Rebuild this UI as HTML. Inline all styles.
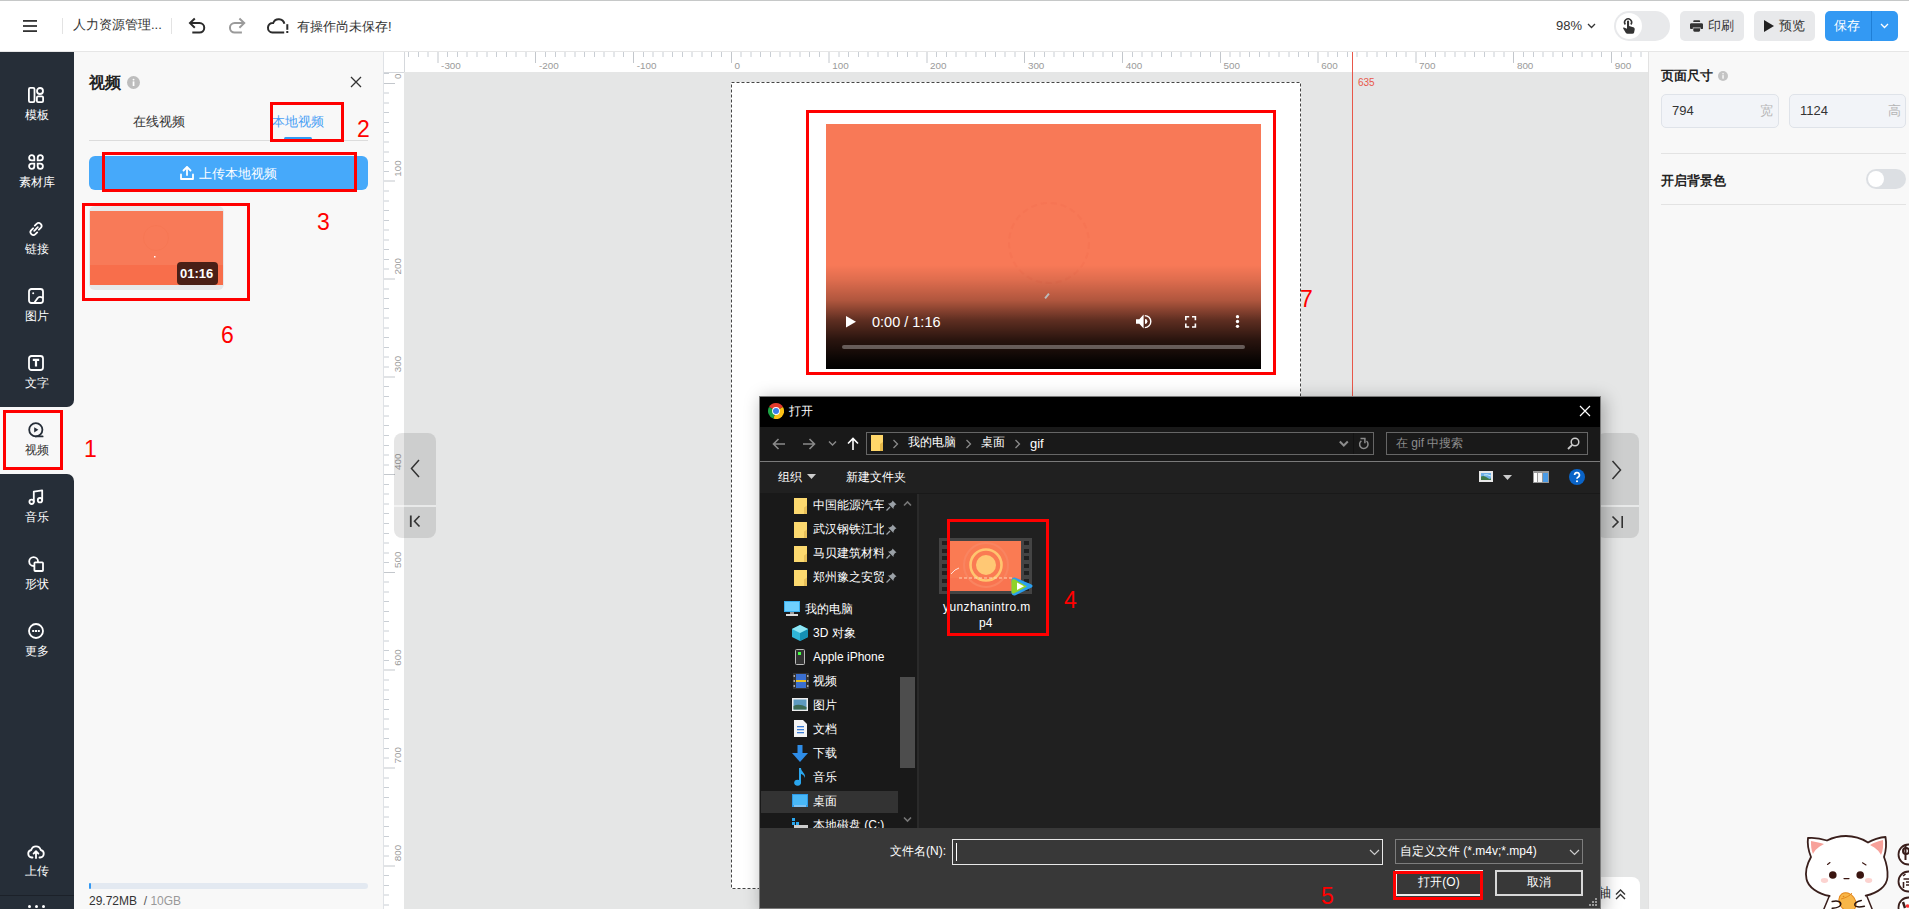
<!DOCTYPE html>
<html><head><meta charset="utf-8">
<style>
*{box-sizing:border-box;margin:0;padding:0}
html,body{width:1909px;height:909px;overflow:hidden;background:#fff;font-family:"Liberation Sans",sans-serif;color:#333}
.a{position:absolute}
.t{position:absolute;white-space:nowrap;line-height:1}
svg{display:block}
.rb{position:absolute;border:3px solid #ff0000}
.rn{position:absolute;color:#f00;font-size:23px;line-height:1;font-family:"Liberation Sans",sans-serif}
</style></head><body>

<!-- ============ TOP BAR ============ -->
<div class="a" style="left:0;top:0;width:1909px;height:52px;background:#fff;border-top:1px solid #c6c8c8;border-bottom:1px solid #e6e6e6"></div>
<svg class="a" style="left:23px;top:20px" width="14" height="12"><rect x="0" y="0" width="14" height="1.8" fill="#333"/><rect x="0" y="5.1" width="14" height="1.8" fill="#333"/><rect x="0" y="10.2" width="14" height="1.8" fill="#333"/></svg>
<div class="a" style="left:62px;top:18px;width:1px;height:16px;background:#e3e3e3"></div>
<div class="t" style="left:73px;top:18px;font-size:13px;color:#333">人力资源管理...</div>
<div class="a" style="left:171px;top:18px;width:1px;height:16px;background:#e3e3e3"></div>
<svg class="a" style="left:180px;top:10px" width="120" height="32" viewBox="180 10 120 32" fill="none" stroke-width="2" stroke-linecap="butt" stroke-linejoin="miter">
<path d="M194.8 18.5 L190 23.1 L194.8 27.7 M190.3 23.1 H199.5 A4.75 4.75 0 0 1 199.5 32.6 H192.3" stroke="#2b2b2b"/>
<path d="M239.4 18.5 L244.2 23.1 L239.4 27.7 M243.9 23.1 H234.7 A4.75 4.75 0 0 0 234.7 32.6 H241.9" stroke="#9a9a9a"/>
<path d="M284.4 23.8 A5.9 5.9 0 0 0 273.2 23 A4.8 4.8 0 0 0 272.4 32.6 H284.2" stroke="#2b2b2b"/>
<rect x="286.3" y="24.2" width="2" height="5.6" fill="#2b2b2b" stroke="none"/><rect x="286.3" y="31" width="2" height="2" fill="#2b2b2b" stroke="none"/>
</svg>
<div class="t" style="left:297px;top:20px;font-size:13px;color:#333">有操作尚未保存!</div>

<div class="t" style="left:1556px;top:19px;font-size:13px;color:#333">98%</div>
<svg class="a" style="left:1587px;top:23px" width="9" height="6"><path d="M1 1 L4.5 4.5 L8 1" fill="none" stroke="#333" stroke-width="1.3"/></svg>
<div class="a" style="left:1614px;top:11px;width:56px;height:30px;border-radius:15px;background:#e8e9eb"></div>
<div class="a" style="left:1616px;top:13px;width:26px;height:26px;border-radius:13px;background:#fff"></div>
<svg class="a" style="left:1610px;top:8px" width="40" height="36" viewBox="1610 8 40 36"><path d="M1625.3 24.5 A3.5 3.5 0 1 1 1630.9 24.5" stroke="#333" stroke-width="1.5" fill="none"/><path d="M1627 21.6 a1.05 1.05 0 0 1 2.1 0 V26 L1633.2 27.2 C1634.4 27.6 1634.9 28.4 1634.7 29.6 L1634.1 32.6 C1633.9 33.4 1633.3 33.8 1632.5 33.8 H1627.5 C1626.8 33.8 1626.3 33.5 1625.9 33 L1623.2 28.6 C1622.9 28 1623.4 27.4 1624 27.6 L1627 28.8 Z" fill="#333"/></svg>
<div class="a" style="left:1680px;top:11px;width:64px;height:30px;border-radius:5px;background:#e8e9eb"></div>
<svg class="a" style="left:1688px;top:18px" width="17" height="16" viewBox="1688 18 17 16"><path d="M1693.3 22 V21.3 C1693.3 20.7 1693.8 20.3 1694.4 20.3 H1699 C1699.6 20.3 1700.1 20.7 1700.1 21.3 V22 Z" fill="#333"/><path d="M1691.3 23.2 H1701.7 C1702.4 23.2 1703 23.8 1703 24.5 V28.2 C1703 28.7 1702.6 29.1 1702.1 29.1 H1700.6 V27.6 H1692.8 V29.1 H1691.2 C1690.6 29.1 1690 28.6 1690 28 V24.5 C1690 23.8 1690.6 23.2 1691.3 23.2 Z" fill="#333"/><path d="M1693.3 28.3 H1700.1 V30.6 C1700.1 31.3 1699.5 31.8 1698.9 31.8 H1694.5 C1693.8 31.8 1693.3 31.3 1693.3 30.6 Z" fill="#333"/></svg>
<div class="t" style="left:1708px;top:19px;font-size:13px;color:#333">印刷</div>
<div class="a" style="left:1754px;top:11px;width:61px;height:30px;border-radius:5px;background:#e8e9eb"></div>
<svg class="a" style="left:1764px;top:20px" width="10" height="12"><path d="M0 0 L10 6 L0 12 Z" fill="#222"/></svg>
<div class="t" style="left:1779px;top:19px;font-size:13px;color:#333">预览</div>
<div class="a" style="left:1825px;top:11px;width:73px;height:30px;border-radius:5px;background:#3399f3"></div>
<div class="a" style="left:1871px;top:11px;width:1px;height:30px;background:#1f7fd6"></div>
<div class="t" style="left:1834px;top:19px;font-size:13px;color:#fff">保存</div>
<svg class="a" style="left:1880px;top:23px" width="9" height="6"><path d="M1 1 L4.5 4.5 L8 1" fill="none" stroke="#fff" stroke-width="1.3"/></svg>

<!-- ============ SIDEBAR ============ -->
<div class="a" style="left:0;top:52px;width:80px;height:857px;background:#f8f8f8"></div>
<div class="a" style="left:0;top:52px;width:74px;height:355px;background:#262e38;border-bottom-right-radius:7px"></div>
<div class="a" style="left:0;top:407px;width:74px;height:67px;background:#f8f8f8"></div>
<div class="a" style="left:0;top:474px;width:74px;height:435px;background:#262e38;border-top-right-radius:7px"></div>
<div class="a" style="left:0;top:895px;width:74px;height:1px;background:#1c2129"></div>
<svg class="a" style="left:28px;top:87px" width="16" height="16" viewBox="0 0 16 16"><rect x="0.9" y="0.9" width="5.6" height="14.2" rx="1.3" fill="none" stroke="#fff" stroke-width="1.8" stroke-linecap="round" stroke-linejoin="round"/><circle cx="12" cy="4" r="3" fill="none" stroke="#fff" stroke-width="1.8" stroke-linecap="round" stroke-linejoin="round"/><rect x="8.9" y="9.4" width="6.2" height="5.7" rx="1.2" fill="none" stroke="#fff" stroke-width="1.8" stroke-linecap="round" stroke-linejoin="round"/></svg>
<div class="t" style="left:0;width:74px;text-align:center;top:109px;font-size:12px;color:#fff">模板</div>
<svg class="a" style="left:28px;top:154px" width="16" height="16" viewBox="0 0 16 16"><path d="M6.3 6.3 V3.7 A2.6 2.6 0 1 0 3.7 6.3 Z" fill="none" stroke="#fff" stroke-width="1.8" stroke-linejoin="miter"/><path d="M9.7 6.3 V3.7 A2.6 2.6 0 1 1 12.3 6.3 Z" fill="none" stroke="#fff" stroke-width="1.8" stroke-linejoin="miter"/><path d="M6.3 9.7 V12.3 A2.6 2.6 0 1 1 3.7 9.7 Z" fill="none" stroke="#fff" stroke-width="1.8" stroke-linejoin="miter"/><path d="M9.7 9.7 V12.3 A2.6 2.6 0 1 0 12.3 9.7 Z" fill="none" stroke="#fff" stroke-width="1.8" stroke-linejoin="miter"/></svg>
<div class="t" style="left:0;width:74px;text-align:center;top:176px;font-size:12px;color:#fff">素材库</div>
<svg class="a" style="left:28px;top:221px" width="16" height="16" viewBox="0 0 16 16"><path d="M6.8 4.6 L8.6 2.8 a2.9 2.9 0 0 1 4.1 4.1 L10.9 8.7" fill="none" stroke="#fff" stroke-width="1.8" stroke-linecap="round" stroke-linejoin="round"/><path d="M9.2 11.4 L7.4 13.2 a2.9 2.9 0 0 1 -4.1 -4.1 L5.1 7.3" fill="none" stroke="#fff" stroke-width="1.8" stroke-linecap="round" stroke-linejoin="round"/><path d="M6.2 9.8 L9.8 6.2" fill="none" stroke="#fff" stroke-width="1.8" stroke-linecap="round" stroke-linejoin="round"/></svg>
<div class="t" style="left:0;width:74px;text-align:center;top:243px;font-size:12px;color:#fff">链接</div>
<svg class="a" style="left:28px;top:288px" width="16" height="16" viewBox="0 0 16 16"><rect x="1" y="1" width="14" height="14" rx="2.5" fill="none" stroke="#fff" stroke-width="1.8" stroke-linecap="round" stroke-linejoin="round"/><circle cx="5.2" cy="5.2" r="1" fill="#fff"/><path d="M6.5 14.5 L9.5 10.2 C10.5 8.8 12.5 8.6 14.5 9.6" fill="none" stroke="#fff" stroke-width="1.8" stroke-linecap="round" stroke-linejoin="round"/></svg>
<div class="t" style="left:0;width:74px;text-align:center;top:310px;font-size:12px;color:#fff">图片</div>
<svg class="a" style="left:28px;top:355px" width="16" height="16" viewBox="0 0 16 16"><rect x="1" y="1" width="14" height="14" rx="2.5" fill="none" stroke="#fff" stroke-width="1.8" stroke-linecap="round" stroke-linejoin="round"/><path d="M4.8 4.8 H11.2 M8 4.8 V11.6" fill="none" stroke="#fff" stroke-width="2.2" stroke-linecap="butt"/></svg>
<div class="t" style="left:0;width:74px;text-align:center;top:377px;font-size:12px;color:#fff">文字</div>
<svg class="a" style="left:28px;top:422px" width="16" height="16" viewBox="0 0 16 16"><circle cx="7.8" cy="7.8" r="6.6" fill="none" stroke="#262e38" stroke-width="1.8"/><path d="M7.8 14.4 H14.6" stroke="#262e38" stroke-width="1.8" stroke-linecap="round"/><path d="M6.2 5.2 L10.4 7.8 L6.2 10.4 Z" fill="#262e38"/></svg>
<div class="t" style="left:0;width:74px;text-align:center;top:444px;font-size:12px;color:#333">视频</div>
<svg class="a" style="left:28px;top:489px" width="16" height="16" viewBox="0 0 16 16"><path d="M5.8 12.8 V2.6 L14.2 1.4 V11.2" fill="none" stroke="#fff" stroke-width="1.8" stroke-linecap="round" stroke-linejoin="round"/><circle cx="3.6" cy="12.8" r="2.2" fill="none" stroke="#fff" stroke-width="1.8" stroke-linecap="round" stroke-linejoin="round"/><circle cx="12" cy="11.2" r="2.2" fill="none" stroke="#fff" stroke-width="1.8" stroke-linecap="round" stroke-linejoin="round"/></svg>
<div class="t" style="left:0;width:74px;text-align:center;top:511px;font-size:12px;color:#fff">音乐</div>
<svg class="a" style="left:28px;top:556px" width="16" height="16" viewBox="0 0 16 16"><circle cx="5.6" cy="5.6" r="4.4" fill="none" stroke="#fff" stroke-width="1.8" stroke-linecap="round" stroke-linejoin="round"/><rect x="6.4" y="6.4" width="8.6" height="8.6" rx="0.8" fill="#262e38" stroke="#fff" stroke-width="1.8"/></svg>
<div class="t" style="left:0;width:74px;text-align:center;top:578px;font-size:12px;color:#fff">形状</div>
<svg class="a" style="left:28px;top:623px" width="16" height="16" viewBox="0 0 16 16"><circle cx="8" cy="8" r="7" fill="none" stroke="#fff" stroke-width="1.8" stroke-linecap="round" stroke-linejoin="round"/><rect x="4.2" y="7" width="2" height="2" fill="#fff"/><rect x="7" y="7" width="2" height="2" fill="#fff"/><rect x="9.8" y="7" width="2" height="2" fill="#fff"/></svg>
<div class="t" style="left:0;width:74px;text-align:center;top:645px;font-size:12px;color:#fff">更多</div>
<svg class="a" style="left:27px;top:843px" width="18" height="16" viewBox="0 0 18 16"><path d="M5.5 14.5 H4.8 A3.8 3.8 0 0 1 4.2 7 A5 5 0 0 1 13.8 7 A3.8 3.8 0 0 1 13.2 14.5 H12.5" fill="none" stroke="#fff" stroke-width="1.8" stroke-linecap="round" stroke-linejoin="round"/><path d="M9 15 V8.5 M6.6 10.6 L9 8.2 L11.4 10.6" fill="none" stroke="#fff" stroke-width="1.8" stroke-linecap="round" stroke-linejoin="round"/></svg>
<div class="t" style="left:0;width:74px;text-align:center;top:865px;font-size:12px;color:#fff">上传</div>
<div class="a" style="left:28px;top:905px;width:3px;height:3px;border-radius:2px;background:#fff"></div><div class="a" style="left:35px;top:905px;width:3px;height:3px;border-radius:2px;background:#fff"></div><div class="a" style="left:42px;top:905px;width:3px;height:3px;border-radius:2px;background:#fff"></div>

<!-- ============ PANEL ============ -->
<div class="a" style="left:74px;top:52px;width:310px;height:857px;background:#f8f8f8;border-right:1px solid #dfe2e6"></div>
<div class="t" style="left:89px;top:75px;font-size:16px;font-weight:bold;color:#222">视频</div>
<svg class="a" style="left:127px;top:76px" width="13" height="13" viewBox="0 0 13 13"><circle cx="6.5" cy="6.5" r="6.5" fill="#bdbdbd"/><rect x="5.7" y="5.4" width="1.7" height="4.6" fill="#fff"/><circle cx="6.55" cy="3.6" r="0.95" fill="#fff"/></svg>
<svg class="a" style="left:350px;top:76px" width="12" height="12"><path d="M1 1 L11 11 M11 1 L1 11" stroke="#333" stroke-width="1.3"/></svg>
<div class="t" style="left:133px;top:115px;font-size:13px;color:#333">在线视频</div>
<div class="t" style="left:272px;top:115px;font-size:13px;color:#4a9ff5">本地视频</div>
<div class="a" style="left:89px;top:140px;width:279px;height:1px;background:#dcdcdc"></div>
<div class="a" style="left:284px;top:137px;width:28px;height:3px;border-radius:2px;background:#3399f3"></div>
<div class="a" style="left:89px;top:156px;width:279px;height:34px;border-radius:6px;background:#46a9fa"></div>
<svg class="a" style="left:180px;top:166px" width="14" height="14" viewBox="0 0 14 14" fill="none" stroke="#fff" stroke-width="1.8" stroke-linecap="round" stroke-linejoin="round"><path d="M3.5 4.5 L7 1 L10.5 4.5"/><path d="M7 1.5 V9"/><path d="M1 8.5 V13 H13 V8.5"/></svg>
<div class="t" style="left:199px;top:167px;font-size:13px;color:#fff">上传本地视频</div>

<div class="a" style="left:89px;top:206px;width:135px;height:84px;border-radius:6px;background:#e7e8ea"></div>
<div class="a" style="left:90px;top:211px;width:133px;height:74px;background:#f87a58"></div>
<div class="a" style="left:90px;top:265px;width:133px;height:20px;background:#f86e4b"></div>
<svg class="a" style="left:90px;top:211px" width="133" height="74"><circle cx="66" cy="27" r="12.5" fill="none" stroke="#f57350" stroke-width="1" opacity=".45"/><rect x="64" y="45" width="1.5" height="1.5" fill="#fff"/></svg>
<div class="a" style="left:177px;top:262px;width:41px;height:23px;border-radius:4px;background:#4a1f16"></div>
<div class="t" style="left:180px;top:267px;font-size:13px;font-weight:bold;color:#fff">01:16</div>

<div class="a" style="left:89px;top:883px;width:279px;height:6px;border-radius:3px;background:#e3e9f1"></div>
<div class="a" style="left:89px;top:883px;width:2px;height:6px;border-radius:1px;background:#3399f3"></div>
<div class="t" style="left:89px;top:895px;font-size:12px;color:#333">29.72MB <span style="color:#555">&nbsp;/&nbsp;</span><span style="color:#999">10GB</span></div>

<!-- ============ CANVAS ============ -->
<div class="a" style="left:384px;top:52px;width:1264px;height:857px;background:#e5e6e6"></div>
<div class="a" style="left:384px;top:52px;width:1264px;height:20px;background:#fff"></div>
<div class="a" style="left:384px;top:52px;width:20px;height:857px;background:#fff"></div>
<div class="a" style="left:404px;top:52px;width:1px;height:20px;background:#d5d8dc"></div>
<div class="a" style="left:384px;top:72px;width:20px;height:1px;background:#d5d8dc"></div>
<svg width="1244" height="20" style="position:absolute;left:404px;top:52px" font-family="Liberation Sans, sans-serif"><line x1="4.5" y1="0" x2="4.5" y2="5" stroke="#c9ced4" stroke-width="1"/><line x1="14.5" y1="0" x2="14.5" y2="5" stroke="#c9ced4" stroke-width="1"/><line x1="24.0" y1="0" x2="24.0" y2="5" stroke="#c9ced4" stroke-width="1"/><line x1="34.0" y1="0" x2="34.0" y2="11" stroke="#c3c7cc" stroke-width="1"/><text x="37.1" y="17" font-size="9.9" fill="#9a9a9a">-300</text><line x1="43.5" y1="0" x2="43.5" y2="5" stroke="#c9ced4" stroke-width="1"/><line x1="53.5" y1="0" x2="53.5" y2="5" stroke="#c9ced4" stroke-width="1"/><line x1="63.0" y1="0" x2="63.0" y2="5" stroke="#c9ced4" stroke-width="1"/><line x1="73.0" y1="0" x2="73.0" y2="5" stroke="#c9ced4" stroke-width="1"/><line x1="83.0" y1="0" x2="83.0" y2="5" stroke="#c9ced4" stroke-width="1"/><line x1="92.5" y1="0" x2="92.5" y2="5" stroke="#c9ced4" stroke-width="1"/><line x1="102.5" y1="0" x2="102.5" y2="5" stroke="#c9ced4" stroke-width="1"/><line x1="112.0" y1="0" x2="112.0" y2="5" stroke="#c9ced4" stroke-width="1"/><line x1="122.0" y1="0" x2="122.0" y2="5" stroke="#c9ced4" stroke-width="1"/><line x1="131.5" y1="0" x2="131.5" y2="11" stroke="#c3c7cc" stroke-width="1"/><text x="134.9" y="17" font-size="9.9" fill="#9a9a9a">-200</text><line x1="141.5" y1="0" x2="141.5" y2="5" stroke="#c9ced4" stroke-width="1"/><line x1="151.5" y1="0" x2="151.5" y2="5" stroke="#c9ced4" stroke-width="1"/><line x1="161.0" y1="0" x2="161.0" y2="5" stroke="#c9ced4" stroke-width="1"/><line x1="171.0" y1="0" x2="171.0" y2="5" stroke="#c9ced4" stroke-width="1"/><line x1="180.5" y1="0" x2="180.5" y2="5" stroke="#c9ced4" stroke-width="1"/><line x1="190.5" y1="0" x2="190.5" y2="5" stroke="#c9ced4" stroke-width="1"/><line x1="200.0" y1="0" x2="200.0" y2="5" stroke="#c9ced4" stroke-width="1"/><line x1="210.0" y1="0" x2="210.0" y2="5" stroke="#c9ced4" stroke-width="1"/><line x1="219.5" y1="0" x2="219.5" y2="5" stroke="#c9ced4" stroke-width="1"/><line x1="229.5" y1="0" x2="229.5" y2="11" stroke="#c3c7cc" stroke-width="1"/><text x="232.7" y="17" font-size="9.9" fill="#9a9a9a">-100</text><line x1="239.5" y1="0" x2="239.5" y2="5" stroke="#c9ced4" stroke-width="1"/><line x1="249.0" y1="0" x2="249.0" y2="5" stroke="#c9ced4" stroke-width="1"/><line x1="259.0" y1="0" x2="259.0" y2="5" stroke="#c9ced4" stroke-width="1"/><line x1="268.5" y1="0" x2="268.5" y2="5" stroke="#c9ced4" stroke-width="1"/><line x1="278.5" y1="0" x2="278.5" y2="5" stroke="#c9ced4" stroke-width="1"/><line x1="288.0" y1="0" x2="288.0" y2="5" stroke="#c9ced4" stroke-width="1"/><line x1="298.0" y1="0" x2="298.0" y2="5" stroke="#c9ced4" stroke-width="1"/><line x1="307.5" y1="0" x2="307.5" y2="5" stroke="#c9ced4" stroke-width="1"/><line x1="317.5" y1="0" x2="317.5" y2="5" stroke="#c9ced4" stroke-width="1"/><line x1="327.5" y1="0" x2="327.5" y2="11" stroke="#c3c7cc" stroke-width="1"/><text x="330.5" y="17" font-size="9.9" fill="#9a9a9a">0</text><line x1="337.0" y1="0" x2="337.0" y2="5" stroke="#c9ced4" stroke-width="1"/><line x1="347.0" y1="0" x2="347.0" y2="5" stroke="#c9ced4" stroke-width="1"/><line x1="356.5" y1="0" x2="356.5" y2="5" stroke="#c9ced4" stroke-width="1"/><line x1="366.5" y1="0" x2="366.5" y2="5" stroke="#c9ced4" stroke-width="1"/><line x1="376.0" y1="0" x2="376.0" y2="5" stroke="#c9ced4" stroke-width="1"/><line x1="386.0" y1="0" x2="386.0" y2="5" stroke="#c9ced4" stroke-width="1"/><line x1="396.0" y1="0" x2="396.0" y2="5" stroke="#c9ced4" stroke-width="1"/><line x1="405.5" y1="0" x2="405.5" y2="5" stroke="#c9ced4" stroke-width="1"/><line x1="415.5" y1="0" x2="415.5" y2="5" stroke="#c9ced4" stroke-width="1"/><line x1="425.0" y1="0" x2="425.0" y2="11" stroke="#c3c7cc" stroke-width="1"/><text x="428.3" y="17" font-size="9.9" fill="#9a9a9a">100</text><line x1="435.0" y1="0" x2="435.0" y2="5" stroke="#c9ced4" stroke-width="1"/><line x1="444.5" y1="0" x2="444.5" y2="5" stroke="#c9ced4" stroke-width="1"/><line x1="454.5" y1="0" x2="454.5" y2="5" stroke="#c9ced4" stroke-width="1"/><line x1="464.0" y1="0" x2="464.0" y2="5" stroke="#c9ced4" stroke-width="1"/><line x1="474.0" y1="0" x2="474.0" y2="5" stroke="#c9ced4" stroke-width="1"/><line x1="484.0" y1="0" x2="484.0" y2="5" stroke="#c9ced4" stroke-width="1"/><line x1="493.5" y1="0" x2="493.5" y2="5" stroke="#c9ced4" stroke-width="1"/><line x1="503.5" y1="0" x2="503.5" y2="5" stroke="#c9ced4" stroke-width="1"/><line x1="513.0" y1="0" x2="513.0" y2="5" stroke="#c9ced4" stroke-width="1"/><line x1="523.0" y1="0" x2="523.0" y2="11" stroke="#c3c7cc" stroke-width="1"/><text x="526.1" y="17" font-size="9.9" fill="#9a9a9a">200</text><line x1="532.5" y1="0" x2="532.5" y2="5" stroke="#c9ced4" stroke-width="1"/><line x1="542.5" y1="0" x2="542.5" y2="5" stroke="#c9ced4" stroke-width="1"/><line x1="552.0" y1="0" x2="552.0" y2="5" stroke="#c9ced4" stroke-width="1"/><line x1="562.0" y1="0" x2="562.0" y2="5" stroke="#c9ced4" stroke-width="1"/><line x1="572.0" y1="0" x2="572.0" y2="5" stroke="#c9ced4" stroke-width="1"/><line x1="581.5" y1="0" x2="581.5" y2="5" stroke="#c9ced4" stroke-width="1"/><line x1="591.5" y1="0" x2="591.5" y2="5" stroke="#c9ced4" stroke-width="1"/><line x1="601.0" y1="0" x2="601.0" y2="5" stroke="#c9ced4" stroke-width="1"/><line x1="611.0" y1="0" x2="611.0" y2="5" stroke="#c9ced4" stroke-width="1"/><line x1="620.5" y1="0" x2="620.5" y2="11" stroke="#c3c7cc" stroke-width="1"/><text x="623.9" y="17" font-size="9.9" fill="#9a9a9a">300</text><line x1="630.5" y1="0" x2="630.5" y2="5" stroke="#c9ced4" stroke-width="1"/><line x1="640.5" y1="0" x2="640.5" y2="5" stroke="#c9ced4" stroke-width="1"/><line x1="650.0" y1="0" x2="650.0" y2="5" stroke="#c9ced4" stroke-width="1"/><line x1="660.0" y1="0" x2="660.0" y2="5" stroke="#c9ced4" stroke-width="1"/><line x1="669.5" y1="0" x2="669.5" y2="5" stroke="#c9ced4" stroke-width="1"/><line x1="679.5" y1="0" x2="679.5" y2="5" stroke="#c9ced4" stroke-width="1"/><line x1="689.0" y1="0" x2="689.0" y2="5" stroke="#c9ced4" stroke-width="1"/><line x1="699.0" y1="0" x2="699.0" y2="5" stroke="#c9ced4" stroke-width="1"/><line x1="708.5" y1="0" x2="708.5" y2="5" stroke="#c9ced4" stroke-width="1"/><line x1="718.5" y1="0" x2="718.5" y2="11" stroke="#c3c7cc" stroke-width="1"/><text x="721.7" y="17" font-size="9.9" fill="#9a9a9a">400</text><line x1="728.5" y1="0" x2="728.5" y2="5" stroke="#c9ced4" stroke-width="1"/><line x1="738.0" y1="0" x2="738.0" y2="5" stroke="#c9ced4" stroke-width="1"/><line x1="748.0" y1="0" x2="748.0" y2="5" stroke="#c9ced4" stroke-width="1"/><line x1="757.5" y1="0" x2="757.5" y2="5" stroke="#c9ced4" stroke-width="1"/><line x1="767.5" y1="0" x2="767.5" y2="5" stroke="#c9ced4" stroke-width="1"/><line x1="777.0" y1="0" x2="777.0" y2="5" stroke="#c9ced4" stroke-width="1"/><line x1="787.0" y1="0" x2="787.0" y2="5" stroke="#c9ced4" stroke-width="1"/><line x1="796.5" y1="0" x2="796.5" y2="5" stroke="#c9ced4" stroke-width="1"/><line x1="806.5" y1="0" x2="806.5" y2="5" stroke="#c9ced4" stroke-width="1"/><line x1="816.5" y1="0" x2="816.5" y2="11" stroke="#c3c7cc" stroke-width="1"/><text x="819.5" y="17" font-size="9.9" fill="#9a9a9a">500</text><line x1="826.0" y1="0" x2="826.0" y2="5" stroke="#c9ced4" stroke-width="1"/><line x1="836.0" y1="0" x2="836.0" y2="5" stroke="#c9ced4" stroke-width="1"/><line x1="845.5" y1="0" x2="845.5" y2="5" stroke="#c9ced4" stroke-width="1"/><line x1="855.5" y1="0" x2="855.5" y2="5" stroke="#c9ced4" stroke-width="1"/><line x1="865.0" y1="0" x2="865.0" y2="5" stroke="#c9ced4" stroke-width="1"/><line x1="875.0" y1="0" x2="875.0" y2="5" stroke="#c9ced4" stroke-width="1"/><line x1="885.0" y1="0" x2="885.0" y2="5" stroke="#c9ced4" stroke-width="1"/><line x1="894.5" y1="0" x2="894.5" y2="5" stroke="#c9ced4" stroke-width="1"/><line x1="904.5" y1="0" x2="904.5" y2="5" stroke="#c9ced4" stroke-width="1"/><line x1="914.0" y1="0" x2="914.0" y2="11" stroke="#c3c7cc" stroke-width="1"/><text x="917.3" y="17" font-size="9.9" fill="#9a9a9a">600</text><line x1="924.0" y1="0" x2="924.0" y2="5" stroke="#c9ced4" stroke-width="1"/><line x1="933.5" y1="0" x2="933.5" y2="5" stroke="#c9ced4" stroke-width="1"/><line x1="943.5" y1="0" x2="943.5" y2="5" stroke="#c9ced4" stroke-width="1"/><line x1="953.0" y1="0" x2="953.0" y2="5" stroke="#c9ced4" stroke-width="1"/><line x1="963.0" y1="0" x2="963.0" y2="5" stroke="#c9ced4" stroke-width="1"/><line x1="973.0" y1="0" x2="973.0" y2="5" stroke="#c9ced4" stroke-width="1"/><line x1="982.5" y1="0" x2="982.5" y2="5" stroke="#c9ced4" stroke-width="1"/><line x1="992.5" y1="0" x2="992.5" y2="5" stroke="#c9ced4" stroke-width="1"/><line x1="1002.0" y1="0" x2="1002.0" y2="5" stroke="#c9ced4" stroke-width="1"/><line x1="1012.0" y1="0" x2="1012.0" y2="11" stroke="#c3c7cc" stroke-width="1"/><text x="1015.1" y="17" font-size="9.9" fill="#9a9a9a">700</text><line x1="1021.5" y1="0" x2="1021.5" y2="5" stroke="#c9ced4" stroke-width="1"/><line x1="1031.5" y1="0" x2="1031.5" y2="5" stroke="#c9ced4" stroke-width="1"/><line x1="1041.0" y1="0" x2="1041.0" y2="5" stroke="#c9ced4" stroke-width="1"/><line x1="1051.0" y1="0" x2="1051.0" y2="5" stroke="#c9ced4" stroke-width="1"/><line x1="1061.0" y1="0" x2="1061.0" y2="5" stroke="#c9ced4" stroke-width="1"/><line x1="1070.5" y1="0" x2="1070.5" y2="5" stroke="#c9ced4" stroke-width="1"/><line x1="1080.5" y1="0" x2="1080.5" y2="5" stroke="#c9ced4" stroke-width="1"/><line x1="1090.0" y1="0" x2="1090.0" y2="5" stroke="#c9ced4" stroke-width="1"/><line x1="1100.0" y1="0" x2="1100.0" y2="5" stroke="#c9ced4" stroke-width="1"/><line x1="1109.5" y1="0" x2="1109.5" y2="11" stroke="#c3c7cc" stroke-width="1"/><text x="1112.9" y="17" font-size="9.9" fill="#9a9a9a">800</text><line x1="1119.5" y1="0" x2="1119.5" y2="5" stroke="#c9ced4" stroke-width="1"/><line x1="1129.5" y1="0" x2="1129.5" y2="5" stroke="#c9ced4" stroke-width="1"/><line x1="1139.0" y1="0" x2="1139.0" y2="5" stroke="#c9ced4" stroke-width="1"/><line x1="1149.0" y1="0" x2="1149.0" y2="5" stroke="#c9ced4" stroke-width="1"/><line x1="1158.5" y1="0" x2="1158.5" y2="5" stroke="#c9ced4" stroke-width="1"/><line x1="1168.5" y1="0" x2="1168.5" y2="5" stroke="#c9ced4" stroke-width="1"/><line x1="1178.0" y1="0" x2="1178.0" y2="5" stroke="#c9ced4" stroke-width="1"/><line x1="1188.0" y1="0" x2="1188.0" y2="5" stroke="#c9ced4" stroke-width="1"/><line x1="1197.5" y1="0" x2="1197.5" y2="5" stroke="#c9ced4" stroke-width="1"/><line x1="1207.5" y1="0" x2="1207.5" y2="11" stroke="#c3c7cc" stroke-width="1"/><text x="1210.7" y="17" font-size="9.9" fill="#9a9a9a">900</text><line x1="1217.5" y1="0" x2="1217.5" y2="5" stroke="#c9ced4" stroke-width="1"/><line x1="1227.0" y1="0" x2="1227.0" y2="5" stroke="#c9ced4" stroke-width="1"/><line x1="1237.0" y1="0" x2="1237.0" y2="5" stroke="#c9ced4" stroke-width="1"/></svg>
<svg width="20" height="837" style="position:absolute;left:384px;top:72px" font-family="Liberation Sans, sans-serif"><line x1="0" y1="1.5" x2="5" y2="1.5" stroke="#c9ced4" stroke-width="1"/><line x1="0" y1="11.5" x2="11" y2="11.5" stroke="#c3c7cc" stroke-width="1"/><text transform="translate(17,6.9) rotate(-90)" font-size="9.9" fill="#9a9a9a">0</text><line x1="0" y1="21.0" x2="5" y2="21.0" stroke="#c9ced4" stroke-width="1"/><line x1="0" y1="31.0" x2="5" y2="31.0" stroke="#c9ced4" stroke-width="1"/><line x1="0" y1="40.5" x2="5" y2="40.5" stroke="#c9ced4" stroke-width="1"/><line x1="0" y1="50.5" x2="5" y2="50.5" stroke="#c9ced4" stroke-width="1"/><line x1="0" y1="60.5" x2="5" y2="60.5" stroke="#c9ced4" stroke-width="1"/><line x1="0" y1="70.0" x2="5" y2="70.0" stroke="#c9ced4" stroke-width="1"/><line x1="0" y1="80.0" x2="5" y2="80.0" stroke="#c9ced4" stroke-width="1"/><line x1="0" y1="89.5" x2="5" y2="89.5" stroke="#c9ced4" stroke-width="1"/><line x1="0" y1="99.5" x2="5" y2="99.5" stroke="#c9ced4" stroke-width="1"/><line x1="0" y1="109.0" x2="11" y2="109.0" stroke="#c3c7cc" stroke-width="1"/><text transform="translate(17,104.7) rotate(-90)" font-size="9.9" fill="#9a9a9a">100</text><line x1="0" y1="119.0" x2="5" y2="119.0" stroke="#c9ced4" stroke-width="1"/><line x1="0" y1="129.0" x2="5" y2="129.0" stroke="#c9ced4" stroke-width="1"/><line x1="0" y1="138.5" x2="5" y2="138.5" stroke="#c9ced4" stroke-width="1"/><line x1="0" y1="148.5" x2="5" y2="148.5" stroke="#c9ced4" stroke-width="1"/><line x1="0" y1="158.0" x2="5" y2="158.0" stroke="#c9ced4" stroke-width="1"/><line x1="0" y1="168.0" x2="5" y2="168.0" stroke="#c9ced4" stroke-width="1"/><line x1="0" y1="177.5" x2="5" y2="177.5" stroke="#c9ced4" stroke-width="1"/><line x1="0" y1="187.5" x2="5" y2="187.5" stroke="#c9ced4" stroke-width="1"/><line x1="0" y1="197.0" x2="5" y2="197.0" stroke="#c9ced4" stroke-width="1"/><line x1="0" y1="207.0" x2="11" y2="207.0" stroke="#c3c7cc" stroke-width="1"/><text transform="translate(17,202.5) rotate(-90)" font-size="9.9" fill="#9a9a9a">200</text><line x1="0" y1="217.0" x2="5" y2="217.0" stroke="#c9ced4" stroke-width="1"/><line x1="0" y1="226.5" x2="5" y2="226.5" stroke="#c9ced4" stroke-width="1"/><line x1="0" y1="236.5" x2="5" y2="236.5" stroke="#c9ced4" stroke-width="1"/><line x1="0" y1="246.0" x2="5" y2="246.0" stroke="#c9ced4" stroke-width="1"/><line x1="0" y1="256.0" x2="5" y2="256.0" stroke="#c9ced4" stroke-width="1"/><line x1="0" y1="265.5" x2="5" y2="265.5" stroke="#c9ced4" stroke-width="1"/><line x1="0" y1="275.5" x2="5" y2="275.5" stroke="#c9ced4" stroke-width="1"/><line x1="0" y1="285.0" x2="5" y2="285.0" stroke="#c9ced4" stroke-width="1"/><line x1="0" y1="295.0" x2="5" y2="295.0" stroke="#c9ced4" stroke-width="1"/><line x1="0" y1="305.0" x2="11" y2="305.0" stroke="#c3c7cc" stroke-width="1"/><text transform="translate(17,300.3) rotate(-90)" font-size="9.9" fill="#9a9a9a">300</text><line x1="0" y1="314.5" x2="5" y2="314.5" stroke="#c9ced4" stroke-width="1"/><line x1="0" y1="324.5" x2="5" y2="324.5" stroke="#c9ced4" stroke-width="1"/><line x1="0" y1="334.0" x2="5" y2="334.0" stroke="#c9ced4" stroke-width="1"/><line x1="0" y1="344.0" x2="5" y2="344.0" stroke="#c9ced4" stroke-width="1"/><line x1="0" y1="353.5" x2="5" y2="353.5" stroke="#c9ced4" stroke-width="1"/><line x1="0" y1="363.5" x2="5" y2="363.5" stroke="#c9ced4" stroke-width="1"/><line x1="0" y1="373.5" x2="5" y2="373.5" stroke="#c9ced4" stroke-width="1"/><line x1="0" y1="383.0" x2="5" y2="383.0" stroke="#c9ced4" stroke-width="1"/><line x1="0" y1="393.0" x2="5" y2="393.0" stroke="#c9ced4" stroke-width="1"/><line x1="0" y1="402.5" x2="11" y2="402.5" stroke="#c3c7cc" stroke-width="1"/><text transform="translate(17,398.1) rotate(-90)" font-size="9.9" fill="#9a9a9a">400</text><line x1="0" y1="412.5" x2="5" y2="412.5" stroke="#c9ced4" stroke-width="1"/><line x1="0" y1="422.0" x2="5" y2="422.0" stroke="#c9ced4" stroke-width="1"/><line x1="0" y1="432.0" x2="5" y2="432.0" stroke="#c9ced4" stroke-width="1"/><line x1="0" y1="441.5" x2="5" y2="441.5" stroke="#c9ced4" stroke-width="1"/><line x1="0" y1="451.5" x2="5" y2="451.5" stroke="#c9ced4" stroke-width="1"/><line x1="0" y1="461.5" x2="5" y2="461.5" stroke="#c9ced4" stroke-width="1"/><line x1="0" y1="471.0" x2="5" y2="471.0" stroke="#c9ced4" stroke-width="1"/><line x1="0" y1="481.0" x2="5" y2="481.0" stroke="#c9ced4" stroke-width="1"/><line x1="0" y1="490.5" x2="5" y2="490.5" stroke="#c9ced4" stroke-width="1"/><line x1="0" y1="500.5" x2="11" y2="500.5" stroke="#c3c7cc" stroke-width="1"/><text transform="translate(17,495.9) rotate(-90)" font-size="9.9" fill="#9a9a9a">500</text><line x1="0" y1="510.0" x2="5" y2="510.0" stroke="#c9ced4" stroke-width="1"/><line x1="0" y1="520.0" x2="5" y2="520.0" stroke="#c9ced4" stroke-width="1"/><line x1="0" y1="529.5" x2="5" y2="529.5" stroke="#c9ced4" stroke-width="1"/><line x1="0" y1="539.5" x2="5" y2="539.5" stroke="#c9ced4" stroke-width="1"/><line x1="0" y1="549.5" x2="5" y2="549.5" stroke="#c9ced4" stroke-width="1"/><line x1="0" y1="559.0" x2="5" y2="559.0" stroke="#c9ced4" stroke-width="1"/><line x1="0" y1="569.0" x2="5" y2="569.0" stroke="#c9ced4" stroke-width="1"/><line x1="0" y1="578.5" x2="5" y2="578.5" stroke="#c9ced4" stroke-width="1"/><line x1="0" y1="588.5" x2="5" y2="588.5" stroke="#c9ced4" stroke-width="1"/><line x1="0" y1="598.0" x2="11" y2="598.0" stroke="#c3c7cc" stroke-width="1"/><text transform="translate(17,593.7) rotate(-90)" font-size="9.9" fill="#9a9a9a">600</text><line x1="0" y1="608.0" x2="5" y2="608.0" stroke="#c9ced4" stroke-width="1"/><line x1="0" y1="618.0" x2="5" y2="618.0" stroke="#c9ced4" stroke-width="1"/><line x1="0" y1="627.5" x2="5" y2="627.5" stroke="#c9ced4" stroke-width="1"/><line x1="0" y1="637.5" x2="5" y2="637.5" stroke="#c9ced4" stroke-width="1"/><line x1="0" y1="647.0" x2="5" y2="647.0" stroke="#c9ced4" stroke-width="1"/><line x1="0" y1="657.0" x2="5" y2="657.0" stroke="#c9ced4" stroke-width="1"/><line x1="0" y1="666.5" x2="5" y2="666.5" stroke="#c9ced4" stroke-width="1"/><line x1="0" y1="676.5" x2="5" y2="676.5" stroke="#c9ced4" stroke-width="1"/><line x1="0" y1="686.0" x2="5" y2="686.0" stroke="#c9ced4" stroke-width="1"/><line x1="0" y1="696.0" x2="11" y2="696.0" stroke="#c3c7cc" stroke-width="1"/><text transform="translate(17,691.5) rotate(-90)" font-size="9.9" fill="#9a9a9a">700</text><line x1="0" y1="706.0" x2="5" y2="706.0" stroke="#c9ced4" stroke-width="1"/><line x1="0" y1="715.5" x2="5" y2="715.5" stroke="#c9ced4" stroke-width="1"/><line x1="0" y1="725.5" x2="5" y2="725.5" stroke="#c9ced4" stroke-width="1"/><line x1="0" y1="735.0" x2="5" y2="735.0" stroke="#c9ced4" stroke-width="1"/><line x1="0" y1="745.0" x2="5" y2="745.0" stroke="#c9ced4" stroke-width="1"/><line x1="0" y1="754.5" x2="5" y2="754.5" stroke="#c9ced4" stroke-width="1"/><line x1="0" y1="764.5" x2="5" y2="764.5" stroke="#c9ced4" stroke-width="1"/><line x1="0" y1="774.0" x2="5" y2="774.0" stroke="#c9ced4" stroke-width="1"/><line x1="0" y1="784.0" x2="5" y2="784.0" stroke="#c9ced4" stroke-width="1"/><line x1="0" y1="794.0" x2="11" y2="794.0" stroke="#c3c7cc" stroke-width="1"/><text transform="translate(17,789.3) rotate(-90)" font-size="9.9" fill="#9a9a9a">800</text><line x1="0" y1="803.5" x2="5" y2="803.5" stroke="#c9ced4" stroke-width="1"/><line x1="0" y1="813.5" x2="5" y2="813.5" stroke="#c9ced4" stroke-width="1"/><line x1="0" y1="823.0" x2="5" y2="823.0" stroke="#c9ced4" stroke-width="1"/><line x1="0" y1="833.0" x2="5" y2="833.0" stroke="#c9ced4" stroke-width="1"/></svg>

<!-- ============ PAGE ============ -->
<div class="a" style="left:731px;top:82px;width:570px;height:807px;background:#fff"></div>
<svg class="a" style="left:731px;top:82px" width="571" height="807"><rect x="0.5" y="0.5" width="569" height="806" fill="none" stroke="#444" stroke-width="1" stroke-dasharray="3 2"/></svg>
<div class="a" style="left:1352px;top:52px;width:1px;height:857px;background:#e8574a"></div>
<div class="t" style="left:1358px;top:77.5px;font-size:10px;color:#e8574a">635</div>

<div class="a" style="left:826px;top:124px;width:435px;height:245px;background:#f87957;overflow:hidden">
  <svg class="a" style="left:168px;top:74px" width="110" height="90" viewBox="0 0 110 90"><circle cx="55" cy="45" r="40" fill="none" stroke="#f57452" stroke-width="2" stroke-dasharray="6 4" opacity="0.7"/></svg>
  <div class="a" style="left:0;top:141px;width:435px;height:104px;background:linear-gradient(to bottom,rgba(0,0,0,0) 0%,rgba(0,0,0,.1) 14%,rgba(0,0,0,.29) 34%,rgba(0,0,0,.62) 53%,rgba(0,0,0,.83) 72%,rgba(0,0,0,.96) 91%,rgba(0,0,0,1) 100%)"></div>
  <div class="a" style="left:218px;top:171px;width:6px;height:2px;background:#bbb;transform:rotate(-50deg)"></div>
  <svg class="a" style="left:20px;top:192px" width="10" height="12"><path d="M0 0 L10 5.8 L0 11.6 Z" fill="#fff"/></svg>
  <div class="t" style="left:46px;top:191px;font-size:14.5px;color:#fff;letter-spacing:0px">0:00 / 1:16</div>
  <svg class="a" style="left:0;top:0" width="435" height="245" viewBox="826 124 435 245">
<path d="M1136 319.2 H1139.3 L1143.6 314.6 V328.4 L1139.3 323.8 H1136 Z" fill="#fff"/>
<path d="M1145 319.1 A2.45 2.45 0 0 1 1145 324 Z" fill="#fff"/>
<path d="M1144.8 315.6 A6 6 0 0 1 1144.8 327.6" fill="none" stroke="#fff" stroke-width="1.4"/>
<path d="M1185.8 320.2 V316.8 H1189.2 M1192 316.8 H1195.4 V320.2 M1195.4 323.6 V327 H1192 M1189.2 327 H1185.8 V323.6" fill="none" stroke="#fff" stroke-width="1.6"/>
<circle cx="1237.5" cy="316.7" r="1.65" fill="#fff"/><circle cx="1237.5" cy="321.5" r="1.65" fill="#fff"/><circle cx="1237.5" cy="326.3" r="1.65" fill="#fff"/>
</svg>
<div class="a" style="left:16px;top:221px;width:403px;height:4px;border-radius:2px;background:rgba(255,255,255,.32)"></div>
</div>

<!-- nav buttons -->
<div class="a" style="left:394px;top:433px;width:42px;height:105px;border-radius:8px;background:rgba(0,0,0,.1)"></div>
<div class="a" style="left:394px;top:505px;width:42px;height:2px;background:rgba(255,255,255,.55)"></div>
<svg class="a" style="left:410px;top:459px" width="11" height="20"><path d="M9 1 L1.5 9.5 L9 18" fill="none" stroke="#333" stroke-width="1.5"/></svg>
<svg class="a" style="left:409px;top:514px" width="14" height="14"><path d="M1.8 1.5 V13" stroke="#333" stroke-width="1.8"/><path d="M10.5 2 L5.5 7.2 L10.5 12.5" fill="none" stroke="#333" stroke-width="1.6"/></svg>
<div class="a" style="left:1597px;top:433px;width:42px;height:105px;border-radius:8px;background:rgba(0,0,0,.1)"></div>
<div class="a" style="left:1597px;top:505px;width:42px;height:2px;background:rgba(255,255,255,.55)"></div>
<svg class="a" style="left:1611px;top:460px" width="11" height="20"><path d="M1.5 1 L9.5 10 L1.5 19" fill="none" stroke="#333" stroke-width="1.5"/></svg>
<svg class="a" style="left:1610px;top:515px" width="14" height="14"><path d="M12.2 1 V13" stroke="#333" stroke-width="1.6"/><path d="M2.5 1.5 L8 7 L2.5 12.5" fill="none" stroke="#333" stroke-width="1.6"/></svg>
<!-- bottom axis button -->
<div class="a" style="left:1560px;top:877px;width:80px;height:40px;border-radius:8px;background:#fff"></div>
<div class="t" style="left:1598px;top:886px;font-size:13px;color:#333">轴</div>
<svg class="a" style="left:1615px;top:889px" width="11" height="11"><path d="M1 5.5 L5.5 1 L10 5.5 M1 10 L5.5 5.5 L10 10" fill="none" stroke="#333" stroke-width="1.4"/></svg>


<!-- ============ RIGHT PANEL ============ -->
<div class="a" style="left:1648px;top:52px;width:261px;height:857px;background:#f8f8f8;border-left:1px solid #e2e2e2"></div>
<div class="t" style="left:1661px;top:69px;font-size:13px;font-weight:bold;color:#222">页面尺寸</div>
<svg class="a" style="left:1718px;top:71px" width="10" height="10" viewBox="0 0 13 13"><circle cx="6.5" cy="6.5" r="6.5" fill="#c4c4c4"/><rect x="5.7" y="5.4" width="1.7" height="4.6" fill="#fff"/><circle cx="6.55" cy="3.6" r="0.95" fill="#fff"/></svg>
<div class="a" style="left:1661px;top:94px;width:118px;height:34px;border-radius:5px;background:#f2f4f8;border:1px solid #dfe3e9"></div>
<div class="t" style="left:1672px;top:104px;font-size:13px;color:#333">794</div>
<div class="t" style="left:1760px;top:104px;font-size:13px;color:#b5b5b5">宽</div>
<div class="a" style="left:1789px;top:94px;width:117px;height:34px;border-radius:5px;background:#f2f4f8;border:1px solid #dfe3e9"></div>
<div class="t" style="left:1800px;top:104px;font-size:13px;color:#333">1124</div>
<div class="t" style="left:1888px;top:104px;font-size:13px;color:#b5b5b5">高</div>
<div class="a" style="left:1661px;top:153px;width:245px;height:1px;background:#e3e3e3"></div>
<div class="t" style="left:1661px;top:174px;font-size:13px;font-weight:bold;color:#222">开启背景色</div>
<div class="a" style="left:1866px;top:169px;width:40px;height:20px;border-radius:10px;background:#dcdfe3"></div>
<div class="a" style="left:1868px;top:171px;width:16px;height:16px;border-radius:8px;background:#fff"></div>
<div class="a" style="left:1661px;top:204px;width:245px;height:1px;background:#e3e3e3"></div>

<!-- ============ DIALOG ============ -->
<div class="a" style="left:759px;top:396px;width:842px;height:513px;background:#7a7a7a;box-shadow:3px 3px 16px 1px rgba(0,0,0,.27)"></div>
<div class="a" style="left:760px;top:397px;width:840px;height:30px;background:#000"></div>
<svg class="a" style="left:768px;top:403px" width="16" height="16" viewBox="0 0 16 16"><path d="M8 8 L1.07 4 A8 8 0 0 1 14.93 4 Z" fill="#e33b2e"/><path d="M8 8 L14.93 4 A8 8 0 0 1 5.26 15.52 Z" fill="#fbc116"/><path d="M8 8 L5.26 15.52 A8 8 0 0 1 1.07 4 Z" fill="#1ea446"/><circle cx="8" cy="8" r="3.9" fill="#fff"/><circle cx="8" cy="8" r="3" fill="#3b7de9"/></svg>
<div class="t" style="left:789px;top:405px;font-size:12px;color:#fff">打开</div>
<svg class="a" style="left:1579px;top:405px" width="12" height="12"><path d="M1 1 L11 11 M11 1 L1 11" stroke="#fff" stroke-width="1.2"/></svg>

<div class="a" style="left:760px;top:427px;width:840px;height:34px;background:#191919"></div>
<svg class="a" style="left:772px;top:437px" width="14" height="14" viewBox="0 0 14 14" fill="none" stroke="#8a8a8a" stroke-width="1.6"><path d="M13 7 H1.5 M6.5 2 L1.5 7 L6.5 12"/></svg>
<svg class="a" style="left:802px;top:437px" width="14" height="14" viewBox="0 0 14 14" fill="none" stroke="#8a8a8a" stroke-width="1.6"><path d="M1 7 H12.5 M7.5 2 L12.5 7 L7.5 12"/></svg>
<svg class="a" style="left:828px;top:440px" width="9" height="7"><path d="M1 1.5 L4.5 5 L8 1.5" fill="none" stroke="#8a8a8a" stroke-width="1.4"/></svg>
<svg class="a" style="left:846px;top:437px" width="14" height="14" viewBox="0 0 14 14" fill="none" stroke="#fff" stroke-width="1.6"><path d="M7 13 V1.5 M2 6.5 L7 1.5 L12 6.5"/></svg>
<div class="a" style="left:866px;top:432px;width:508px;height:23px;border:1px solid #666;background:#191919"></div>
<svg class="a" style="left:871px;top:435px" width="14" height="17" viewBox="0 0 14 17"><rect x="0" y="0" width="12" height="16" fill="#ffd76a"/><path d="M9 9 L12 7 V16 H9 Z" fill="#e6b94a"/></svg>
<svg class="a" style="left:892px;top:439px" width="7" height="10"><path d="M1.5 1 L5.5 5 L1.5 9" fill="none" stroke="#8a8a8a" stroke-width="1.3"/></svg>
<div class="t" style="left:908px;top:436px;font-size:12px;color:#fff">我的电脑</div>
<svg class="a" style="left:965px;top:439px" width="7" height="10"><path d="M1.5 1 L5.5 5 L1.5 9" fill="none" stroke="#8a8a8a" stroke-width="1.3"/></svg>
<div class="t" style="left:981px;top:436px;font-size:12px;color:#fff">桌面</div>
<svg class="a" style="left:1014px;top:439px" width="7" height="10"><path d="M1.5 1 L5.5 5 L1.5 9" fill="none" stroke="#8a8a8a" stroke-width="1.3"/></svg>
<div class="t" style="left:1030px;top:436.5px;font-size:13px;color:#fff">gif</div>
<svg class="a" style="left:1338px;top:440px" width="12" height="9"><path d="M1.8 1.5 L5.8 5.5 L9.8 1.5" fill="none" stroke="#8c8c8c" stroke-width="2"/></svg>
<div class="a" style="left:1353px;top:433px;width:1px;height:21px;background:#121212"></div>
<svg class="a" style="left:1357px;top:436px" width="14" height="14" viewBox="1357 436 14 14"><path d="M1366.5 441 A4.2 4.2 0 1 1 1361.4 440.8" fill="none" stroke="#8c8c8c" stroke-width="1.5"/><path d="M1360.5 438.6 H1364.9 V443.2" fill="none" stroke="#8c8c8c" stroke-width="1.5"/></svg>
<div class="a" style="left:1386px;top:432px;width:202px;height:23px;border:1px solid #666;background:#191919"></div>
<div class="t" style="left:1396px;top:437px;font-size:12px;color:#8c8c8c">在 gif 中搜索</div>
<svg class="a" style="left:1567px;top:437px" width="13" height="13" viewBox="0 0 13 13"><circle cx="8" cy="5" r="3.8" fill="none" stroke="#ccc" stroke-width="1.5"/><path d="M5.2 7.8 L1 12" stroke="#ccc" stroke-width="1.8"/></svg>

<div class="a" style="left:760px;top:462px;width:840px;height:31px;background:#202020"></div>
<div class="a" style="left:760px;top:493px;width:840px;height:1px;background:#191919"></div>
<div class="t" style="left:778px;top:471px;font-size:12px;color:#fff">组织</div>
<svg class="a" style="left:807px;top:474px" width="9" height="6"><path d="M0 0 H9 L4.5 5 Z" fill="#ccc"/></svg>
<div class="t" style="left:846px;top:471px;font-size:12px;color:#fff">新建文件夹</div>
<svg class="a" style="left:1479px;top:471px" width="14" height="11" viewBox="0 0 14 11"><rect x="0" y="0" width="14" height="11" fill="#e8e8e8"/><rect x="2" y="2" width="10" height="7" fill="#6fb0e8"/><path d="M2 5.5 Q5 4 8 6.5 T12 7 V9 H2 Z" fill="#3f7a4a"/><path d="M5 4 Q8 3 12 5" stroke="#dff" stroke-width=".8" fill="none"/></svg>
<svg class="a" style="left:1503px;top:475px" width="9" height="6"><path d="M0 0 H9 L4.5 5 Z" fill="#ccc"/></svg>
<svg class="a" style="left:1533px;top:471px" width="16" height="12" viewBox="0 0 16 12"><rect x="0" y="0" width="16" height="12" fill="#999"/><rect x="1" y="2" width="3" height="9" fill="#fff"/><rect x="5" y="2" width="4" height="9" fill="#f4f4f4"/><rect x="10" y="2" width="5" height="9" fill="#4a9be6"/></svg>
<svg class="a" style="left:1569px;top:469px" width="16" height="16" viewBox="0 0 16 16"><circle cx="8" cy="8" r="8" fill="#0a64c8"/><path d="M5.6 6 a2.4 2.4 0 1 1 3.4 2.2 c-.8 .4 -1 .8 -1 1.6" fill="none" stroke="#fff" stroke-width="1.7"/><circle cx="8" cy="12.2" r="1" fill="#fff"/></svg>

<!-- tree -->
<div class="a" style="left:760px;top:494px;width:157px;height:334px;background:#191919"></div>
<div class="a" style="left:917px;top:494px;width:2px;height:334px;background:#2a2a2a"></div>
<div class="a" style="left:919px;top:494px;width:681px;height:334px;background:#202020"></div>
<div class="a" style="left:900px;top:677px;width:15px;height:91px;background:#4d4d4d"></div>
<svg class="a" style="left:903px;top:500px" width="9" height="7"><path d="M1 5.5 L4.5 2 L8 5.5" fill="none" stroke="#777" stroke-width="1.6"/></svg>
<svg class="a" style="left:903px;top:816px" width="9" height="7"><path d="M1 1.5 L4.5 5 L8 1.5" fill="none" stroke="#777" stroke-width="1.6"/></svg>
<div class="a" style="left:761px;top:791px;width:137px;height:22px;background:#333"></div>
<div class="a" style="left:0;top:0;width:1909px;height:909px;clip-path:inset(494px 1010px 81px 760px)">
<svg class="a" style="left:794px;top:497px" width="14" height="17" viewBox="0 0 14 17"><rect x="0" y="1" width="13" height="16" fill="#fcd96f"/><path d="M10 10.5 L13 8.5 V17 H10 Z" fill="#e8c05a"/></svg>
<div class="t" style="left:813px;top:499px;font-size:12px;color:#fff;width:71px;overflow:hidden">中国能源汽车</div>
<svg class="a" style="left:886px;top:500px" width="11" height="11" viewBox="0 0 11 11"><path d="M6.5 0.5 L10.5 4.5 L9 5 L7.5 7.5 L7.5 9 L2 3.5 L3.5 3.5 L6 2 Z" fill="#9aa0a6"/><path d="M4 7 L0.5 10.5" stroke="#9aa0a6" stroke-width="1.3"/></svg>
<svg class="a" style="left:794px;top:521px" width="14" height="17" viewBox="0 0 14 17"><rect x="0" y="1" width="13" height="16" fill="#fcd96f"/><path d="M10 10.5 L13 8.5 V17 H10 Z" fill="#e8c05a"/></svg>
<div class="t" style="left:813px;top:523px;font-size:12px;color:#fff;width:71px;overflow:hidden">武汉钢铁江北</div>
<svg class="a" style="left:886px;top:524px" width="11" height="11" viewBox="0 0 11 11"><path d="M6.5 0.5 L10.5 4.5 L9 5 L7.5 7.5 L7.5 9 L2 3.5 L3.5 3.5 L6 2 Z" fill="#9aa0a6"/><path d="M4 7 L0.5 10.5" stroke="#9aa0a6" stroke-width="1.3"/></svg>
<svg class="a" style="left:794px;top:545px" width="14" height="17" viewBox="0 0 14 17"><rect x="0" y="1" width="13" height="16" fill="#fcd96f"/><path d="M10 10.5 L13 8.5 V17 H10 Z" fill="#e8c05a"/></svg>
<div class="t" style="left:813px;top:547px;font-size:12px;color:#fff;width:71px;overflow:hidden">马贝建筑材料</div>
<svg class="a" style="left:886px;top:548px" width="11" height="11" viewBox="0 0 11 11"><path d="M6.5 0.5 L10.5 4.5 L9 5 L7.5 7.5 L7.5 9 L2 3.5 L3.5 3.5 L6 2 Z" fill="#9aa0a6"/><path d="M4 7 L0.5 10.5" stroke="#9aa0a6" stroke-width="1.3"/></svg>
<svg class="a" style="left:794px;top:569px" width="14" height="17" viewBox="0 0 14 17"><rect x="0" y="1" width="13" height="16" fill="#fcd96f"/><path d="M10 10.5 L13 8.5 V17 H10 Z" fill="#e8c05a"/></svg>
<div class="t" style="left:813px;top:571px;font-size:12px;color:#fff;width:71px;overflow:hidden">郑州豫之安贸</div>
<svg class="a" style="left:886px;top:572px" width="11" height="11" viewBox="0 0 11 11"><path d="M6.5 0.5 L10.5 4.5 L9 5 L7.5 7.5 L7.5 9 L2 3.5 L3.5 3.5 L6 2 Z" fill="#9aa0a6"/><path d="M4 7 L0.5 10.5" stroke="#9aa0a6" stroke-width="1.3"/></svg>
<svg class="a" style="left:784px;top:601px" width="16" height="15" viewBox="0 0 16 15"><rect x="0" y="0" width="16" height="11" fill="#3ab0f0"/><rect x="1" y="1" width="14" height="9" fill="#6fd0ff"/><rect x="6" y="11" width="4" height="2" fill="#999"/><rect x="2" y="13" width="12" height="2" fill="#ddd"/></svg>
<div class="t" style="left:805px;top:603px;font-size:12px;color:#fff">我的电脑</div>
<svg class="a" style="left:792px;top:625px" width="16" height="16" viewBox="0 0 16 16"><path d="M8 0 L16 4 V12 L8 16 L0 12 V4 Z" fill="#2fb6d8"/><path d="M8 8 L16 4 V12 L8 16 Z" fill="#1590b5"/><path d="M0 4 L8 0 L16 4 L8 8 Z" fill="#8ee6f5"/></svg>
<div class="t" style="left:813px;top:627px;font-size:12px;color:#fff">3D 对象</div>
<svg class="a" style="left:795px;top:649px" width="10" height="16" viewBox="0 0 10 16"><rect x="0.5" y="0.5" width="9" height="15" rx="1" fill="#333" stroke="#bbb"/><rect x="3" y="3" width="3" height="3" fill="#4f4"/></svg>
<div class="t" style="left:813px;top:651px;font-size:12px;color:#fff">Apple iPhone</div>
<svg class="a" style="left:793px;top:673px" width="16" height="16" viewBox="0 0 16 16"><rect x="0" y="0" width="16" height="16" fill="#333"/><rect x="3" y="1" width="10" height="14" fill="#3a6fd0"/><rect x="3" y="7" width="10" height="2" fill="#e8c020"/><rect x="0.5" y="2" width="1.5" height="2" fill="#aaa"/><rect x="0.5" y="7" width="1.5" height="2" fill="#aaa"/><rect x="0.5" y="12" width="1.5" height="2" fill="#aaa"/><rect x="14" y="2" width="1.5" height="2" fill="#aaa"/><rect x="14" y="7" width="1.5" height="2" fill="#aaa"/><rect x="14" y="12" width="1.5" height="2" fill="#aaa"/></svg>
<div class="t" style="left:813px;top:675px;font-size:12px;color:#fff">视频</div>
<svg class="a" style="left:792px;top:698px" width="16" height="13" viewBox="0 0 16 13"><rect x="0" y="0" width="16" height="13" fill="#eee"/><rect x="1.5" y="1.5" width="13" height="10" fill="#5d9ac0"/><path d="M1.5 8 Q7 5 14.5 9 V11.5 H1.5 Z" fill="#3d6b55"/></svg>
<div class="t" style="left:813px;top:699px;font-size:12px;color:#fff">图片</div>
<svg class="a" style="left:794px;top:720px" width="13" height="17" viewBox="0 0 13 17"><path d="M0 0 H9 L13 4 V17 H0 Z" fill="#f4f4f4"/><rect x="3" y="6" width="7" height="1.3" fill="#3b7dd8"/><rect x="3" y="9" width="7" height="1.3" fill="#3b7dd8"/><rect x="3" y="12" width="7" height="1.3" fill="#3b7dd8"/></svg>
<div class="t" style="left:813px;top:723px;font-size:12px;color:#fff">文档</div>
<svg class="a" style="left:792px;top:745px" width="16" height="17" viewBox="0 0 16 17"><rect x="5.5" y="0" width="5" height="9" fill="#2e8de8"/><path d="M0 8 H16 L8 17 Z" fill="#2e8de8"/></svg>
<div class="t" style="left:813px;top:747px;font-size:12px;color:#fff">下载</div>
<svg class="a" style="left:793px;top:768px" width="14" height="18" viewBox="0 0 14 18"><path d="M6 0 H8 C8 4 13 5 12 10 C11 7 9 6 8 6 V14 A3.5 3 0 1 1 6 12 Z" fill="#2aa6ee"/></svg>
<div class="t" style="left:813px;top:771px;font-size:12px;color:#fff">音乐</div>
<svg class="a" style="left:792px;top:794px" width="16" height="14" viewBox="0 0 16 14"><rect x="0" y="0" width="16" height="13" fill="#2c9ae8"/><rect x="1" y="1" width="14" height="10" fill="#49b8f8"/><rect x="2" y="11.5" width="12" height="1" fill="#cfe9ff"/></svg>
<div class="t" style="left:813px;top:795px;font-size:12px;color:#fff">桌面</div>
<svg class="a" style="left:792px;top:818px" width="16" height="12" viewBox="0 0 16 12"><rect x="0" y="0" width="3" height="3" fill="#2aa6ee"/><rect x="0" y="4" width="3" height="3" fill="#2aa6ee"/><rect x="4" y="4" width="3" height="3" fill="#2aa6ee"/><rect x="2" y="7" width="14" height="5" fill="#ccc"/></svg>
<div class="t" style="left:813px;top:819px;font-size:12px;color:#fff">本地磁盘 (C:)</div>
</div>

<!-- content file -->
<div class="a" style="left:939px;top:538px;width:93px;height:56px;background:#444"></div>
<div class="a" style="left:942px;top:541.0px;width:5px;height:4px;background:#202020"></div>
<div class="a" style="left:1024px;top:541.0px;width:5px;height:4px;background:#202020"></div>
<div class="a" style="left:942px;top:548.6px;width:5px;height:4px;background:#202020"></div>
<div class="a" style="left:1024px;top:548.6px;width:5px;height:4px;background:#202020"></div>
<div class="a" style="left:942px;top:556.2px;width:5px;height:4px;background:#202020"></div>
<div class="a" style="left:1024px;top:556.2px;width:5px;height:4px;background:#202020"></div>
<div class="a" style="left:942px;top:563.8px;width:5px;height:4px;background:#202020"></div>
<div class="a" style="left:1024px;top:563.8px;width:5px;height:4px;background:#202020"></div>
<div class="a" style="left:942px;top:571.4px;width:5px;height:4px;background:#202020"></div>
<div class="a" style="left:1024px;top:571.4px;width:5px;height:4px;background:#202020"></div>
<div class="a" style="left:942px;top:579.0px;width:5px;height:4px;background:#202020"></div>
<div class="a" style="left:1024px;top:579.0px;width:5px;height:4px;background:#202020"></div>
<div class="a" style="left:942px;top:586.6px;width:5px;height:4px;background:#202020"></div>
<div class="a" style="left:1024px;top:586.6px;width:5px;height:4px;background:#202020"></div>
<div class="a" style="left:950px;top:541px;width:71px;height:50px;background:#fa7b53;overflow:hidden">
  <div class="a" style="left:0;top:37px;width:71px;height:13px;background:#f97450"></div>
  <svg class="a" style="left:0;top:0" width="71" height="50"><circle cx="36" cy="24" r="22" fill="none" stroke="#f98460" stroke-width="2"/><circle cx="36" cy="24" r="15.5" fill="none" stroke="#ffc56f" stroke-width="2.6"/><circle cx="36" cy="24" r="10" fill="#ffc874"/><path d="M9 37 H62" stroke="#ffd8b8" stroke-width="1" stroke-dasharray="3 2"/><path d="M1 33 Q5 28 9 27" fill="none" stroke="#fff" stroke-width="1" opacity=".8"/></svg>
</div>
<svg class="a" style="left:1010px;top:576px" width="24" height="21" viewBox="0 0 24 21"><path d="M5 1.5 C3 1 1.5 2.5 1.5 4.5 V16.5 C1.5 18.5 3 20 5 19.5 L21 11.8 C23 10.8 23 9.2 21 8.2 Z" fill="#2aa0f0"/><path d="M4 3 C2.5 3 1.5 4 1.5 5.5 V15.5 C1.5 17 2.5 18 4 17.5 L17 10.5 Z" fill="#8fd22a"/><path d="M1.5 5 V15.5 C1 14 1 6 1.5 5 Z" fill="#f6a01a"/><path d="M7 6.5 V14 L14 10.2 Z" fill="#fff"/></svg>
<div class="t" style="left:943px;top:601px;font-size:12px;color:#fff;letter-spacing:0.4px">yunzhanintro.m</div>
<div class="t" style="left:979px;top:617px;font-size:12px;color:#fff">p4</div>

<!-- bottom -->
<div class="a" style="left:760px;top:828px;width:840px;height:80px;background:#383838"></div>
<div class="t" style="left:890px;top:845px;font-size:12px;color:#fff">文件名(N):</div>
<div class="a" style="left:952px;top:839px;width:431px;height:26px;border:1px solid #e8e8e8;background:#383838"></div>
<div class="a" style="left:956px;top:843px;width:1px;height:18px;background:#fff"></div>
<svg class="a" style="left:1369px;top:849px" width="11" height="7"><path d="M1 1 L5.5 5.5 L10 1" fill="none" stroke="#ccc" stroke-width="1.2"/></svg>
<div class="a" style="left:1395px;top:839px;width:188px;height:25px;border:1px solid #7d7d7d;background:#383838"></div>
<div class="t" style="left:1400px;top:845px;font-size:12px;color:#fff">自定义文件 (*.m4v;*.mp4)</div>
<svg class="a" style="left:1569px;top:849px" width="11" height="7"><path d="M1 1 L5.5 5.5 L10 1" fill="none" stroke="#ccc" stroke-width="1.2"/></svg>
<div class="a" style="left:1395px;top:870px;width:88px;height:26px;border:2px solid #eee;background:#383838"></div>
<div class="t" style="left:1395px;width:88px;text-align:center;top:876px;font-size:12px;color:#fff">打开(O)</div>
<div class="a" style="left:1495px;top:870px;width:88px;height:26px;border:2px solid #d8d8d8;background:#383838"></div>
<div class="t" style="left:1495px;width:88px;text-align:center;top:876px;font-size:12px;color:#fff">取消</div>
<svg class="a" style="left:1588px;top:897px" width="10" height="10"><rect x="7" y="1" width="2" height="2" fill="#999"/><rect x="4" y="4" width="2" height="2" fill="#999"/><rect x="7" y="4" width="2" height="2" fill="#999"/><rect x="1" y="7" width="2" height="2" fill="#999"/><rect x="4" y="7" width="2" height="2" fill="#999"/><rect x="7" y="7" width="2" height="2" fill="#999"/></svg>

<!-- ============ ANNOTATIONS ============ -->
<div class="rb" style="left:3px;top:410px;width:60px;height:60px"></div>
<div class="rb" style="left:270px;top:102px;width:74px;height:40px"></div>
<div class="rb" style="left:102px;top:152px;width:255px;height:40px"></div>
<div class="rb" style="left:82px;top:203px;width:168px;height:98px"></div>
<div class="rb" style="left:806px;top:110px;width:470px;height:265px"></div>
<div class="rb" style="left:947px;top:519px;width:102px;height:117px"></div>
<div class="rb" style="left:1393px;top:871px;width:90px;height:29px"></div>
<div class="rn" style="left:84px;top:438px">1</div>
<div class="rn" style="left:357px;top:118px">2</div>
<div class="rn" style="left:317px;top:211px">3</div>
<div class="rn" style="left:1064px;top:589px">4</div>
<div class="rn" style="left:1321px;top:885px">5</div>
<div class="rn" style="left:221px;top:324px">6</div>
<div class="rn" style="left:1300px;top:288px">7</div>

<!-- cat -->
<svg class="a" style="left:1795px;top:825px" width="114" height="84" viewBox="1795 825 114 84">
  <path d="M1829 895 L1823 912 L1874 912 L1867 895 Z" fill="#fff"/>
  <path d="M1829.3 896 L1823.5 910 M1866.8 896 L1872.5 910" stroke="#3a1f1c" stroke-width="1.5" fill="none"/>
  <path d="M1808 838 C1807 845 1809 852 1811 857 C1807 864 1805 872 1806.5 879 C1808 887 1818 894 1829.6 896 L1865.7 895.7 C1878 893 1887 886 1887.5 877 C1888 869 1886 862 1884 857 C1886 851 1886.5 843 1885.5 837 C1880 837 1872 840 1868 842.5 C1860 837.5 1852 836 1846 836 C1839 836 1832 838 1827 840.5 C1821 838.5 1813 837.5 1808 838 Z" fill="#fff"/>
  <path d="M1829.6 896 C1818 894 1808 887 1806.5 879 C1805 872 1807 864 1811 857 C1809 852 1807 845 1808 838 C1813 837.5 1821 838.5 1827 840.5 C1832 838 1839 836 1846 836 C1852 836 1860 837.5 1868 842.5 C1872 840 1880 837 1885.5 837 C1886.5 843 1886 851 1884 857 C1886 862 1888 869 1887.5 877 C1887 886 1878 893 1865.7 895.7" fill="none" stroke="#3a1f1c" stroke-width="1.8" stroke-linejoin="round" stroke-linecap="round"/>
  <path d="M1811 841 C1816 842 1821 843 1824 844 C1818 847 1815 850 1813 854 C1811 850 1811 845 1811 841 Z" fill="#f7a19a"/>
  <path d="M1883 840 C1878 841 1873 843 1870 845 C1876 848 1879 851 1881 855 C1883 851 1883.5 845 1883 840 Z" fill="#f7a19a"/>
  <circle cx="1832.8" cy="875" r="3.8" fill="#3a1510"/>
  <circle cx="1860.2" cy="875" r="3.8" fill="#3a1510"/>
  <ellipse cx="1824.5" cy="880.5" rx="3.6" ry="2.4" fill="#fcd3d0"/>
  <ellipse cx="1868.6" cy="880.5" rx="3.6" ry="2.4" fill="#fcd3d0"/>
  <path d="M1844 878.6 H1849" stroke="#3a1510" stroke-width="1.2" stroke-linecap="round"/>
  <path d="M1827.5 864.5 L1830 862.5" stroke="#3a1510" stroke-width="1.1" stroke-linecap="round"/>
  <path d="M1862.5 862.8 L1866 865" stroke="#3a1510" stroke-width="1.1" stroke-linecap="round"/>
  <ellipse cx="1847.5" cy="902" rx="7.8" ry="10" transform="rotate(-35 1847.5 902)" fill="#f8b648" stroke="#e2861a" stroke-width="1"/>
  <path d="M1841 899 C1845 898 1850 896 1852 893" fill="none" stroke="#e2861a" stroke-width="0.9"/>
  <circle cx="1843.5" cy="896.5" r="0.8" fill="#e2861a"/>
  <path d="M1832.2 901.5 C1838 900 1841 902 1840.8 904 C1840.6 906.5 1837 908 1832.2 908.3" fill="none" stroke="#2a1410" stroke-width="1.5" stroke-linecap="round"/>
  <path d="M1861.3 900.4 C1856 901.5 1854.5 903.5 1854.8 905.2 C1855.2 907 1859 907.5 1864.4 906.2" fill="none" stroke="#2a1410" stroke-width="1.5" stroke-linecap="round"/>
  <circle cx="1908.5" cy="854.5" r="10" fill="#fff" stroke="#3a1f1c" stroke-width="1.8"/>
  <circle cx="1908.5" cy="881.5" r="10" fill="#fff" stroke="#3a1f1c" stroke-width="1.8"/>
  <circle cx="1908.5" cy="907.5" r="10" fill="#fff" stroke="#3a1f1c" stroke-width="1.8"/>
  <path d="M1903 851 a3 3 0 1 0 6 0 a3 3 0 1 0 -6 0" fill="none" stroke="#3a1f1c" stroke-width="2"/><path d="M1905.5 845 V860" stroke="#3a1f1c" stroke-width="2"/>
  <path d="M1903 876 L1905.5 874 M1903.5 879 H1909 M1903.5 882 V888 M1906 882 H1909 M1906 885 H1909" fill="none" stroke="#3a1f1c" stroke-width="1.6"/>
  <path d="M1903 902 L1905 908" stroke="#3a1f1c" stroke-width="2.4"/><circle cx="1907.5" cy="906" r="1.8" fill="#f33"/>
</svg>

</body></html>
